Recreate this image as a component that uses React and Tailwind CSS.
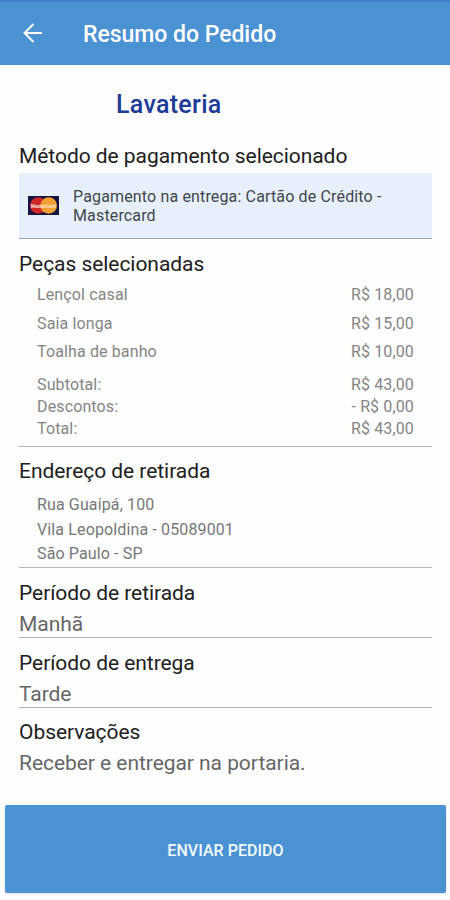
const items = [
  { name: "Lençol casal", price: "R$ 18,00" },
  { name: "Saia longa", price: "R$ 15,00" },
  { name: "Toalha de banho", price: "R$ 10,00" },
];

const totals = [
  { label: "Subtotal:", value: "R$ 43,00" },
  { label: "Descontos:", value: "- R$ 0,00" },
  { label: "Total:", value: "R$ 43,00" },
];

const address = ["Rua Guaipá, 100", "Vila Leopoldina - 05089001", "São Paulo - SP"];

const SectionTitle = ({ children }) => (
  <h2 className="h-7 text-[21px] leading-7 tracking-[-0.05px] text-[#202020]">{children}</h2>
);

const MastercardLogo = () => (
  <svg viewBox="0 0 31 19" className="h-[19px] w-[31px] shrink-0">
    <rect width="31" height="19" fill="#171342" />
    <circle cx="10.3" cy="9.5" r="8.3" fill="#cf2629" />
    <circle cx="20.7" cy="9.5" r="8.3" fill="#f3a032" />
    <text
      x="15.5"
      y="11.5"
      textAnchor="middle"
      textLength="25"
      lengthAdjust="spacingAndGlyphs"
      fontSize="5.5"
      fontWeight="700"
      letterSpacing="0"
      fill="#fbe3d6"
    >
      MasterCard
    </text>
  </svg>
);

const App = () => {
  return (
    <div className="flex h-[900px] w-[450px] flex-col bg-[#fefefe] font-['Roboto',sans-serif]">
      {/* Header */}
      <header className="flex h-[65px] items-center border-t-2 border-[#447fcb] bg-[#4b92d3] pt-1 text-white">
        <button className="mb-[5px] ml-[22px] w-[61px]" aria-label="Voltar">
          <svg
            viewBox="0 0 22 20"
            className="h-5 w-[22px]"
            fill="none"
            stroke="currentColor"
            strokeWidth="1.9"
          >
            <path d="M20 10H2.5M11.5 1L2.5 10L11.5 19" />
          </svg>
        </button>
        <h1 className="text-[23px] font-medium tracking-[-0.03px]">Resumo do Pedido</h1>
      </header>

      <main className="flex flex-col pr-[18px] pl-[19px]">
        <p className="mt-[25px] ml-[97px] h-[30px] text-[25px] leading-[30px] font-medium tracking-[0.3px] text-[#1c3c98]">
          Lavateria
        </p>

        {/* Payment method */}
        <section className="mt-[22px] border-b border-[#a3a7ac]">
          <SectionTitle>Método de pagamento selecionado</SectionTitle>
          <div className="mt-[3px] flex h-[65px] items-center bg-[#e7f0fa] pl-[9px]">
            <MastercardLogo />
            <p className="ml-[14px] text-[16px] leading-[19px] tracking-[0.15px] text-[#41464d]">
              Pagamento na entrega: Cartão de Crédito -<br />
              Mastercard
            </p>
          </div>
        </section>

        {/* Selected pieces */}
        <section className="mt-[11px] h-[197px] border-b border-[#b5b5b5] text-[16px] tracking-[0.13px] text-[#858585]">
          <SectionTitle>Peças selecionadas</SectionTitle>
          <div className="mt-[3px] pr-[18px] pl-[18px]">
            {items.map((item) => (
              <div key={item.name} className="flex h-[28.5px] items-center justify-between">
                <span>{item.name}</span>
                <span>{item.price}</span>
              </div>
            ))}
          </div>
          <div className="mt-[7px] pr-[18px] pl-[18px]">
            {totals.map((row) => (
              <div key={row.label} className="flex h-[22px] items-center justify-between">
                <span>{row.label}</span>
                <span>{row.value}</span>
              </div>
            ))}
          </div>
        </section>

        {/* Pickup address */}
        <section className="mt-[10px] h-[111px] border-b border-[#b5b5b5]">
          <SectionTitle>Endereço de retirada</SectionTitle>
          <div className="mt-2 pl-[18px] text-[16px] leading-[24.5px] tracking-[0.13px] text-[#777777]">
            {address.map((line) => (
              <p key={line}>{line}</p>
            ))}
          </div>
        </section>

        {/* Pickup and delivery periods */}
        <section className="mt-[11px] h-[59px] border-b border-[#b5b5b5]">
          <SectionTitle>Período de retirada</SectionTitle>
          <p className="mt-[3px] text-[21px] leading-7 tracking-[-0.05px] text-[#666666]">Manhã</p>
        </section>
        <section className="mt-[11px] h-[59px] border-b border-[#b5b5b5]">
          <SectionTitle>Período de entrega</SectionTitle>
          <p className="mt-[3px] text-[21px] leading-7 tracking-[-0.05px] text-[#666666]">Tarde</p>
        </section>

        {/* Notes */}
        <section className="mt-[10px] h-[60px]">
          <SectionTitle>Observações</SectionTitle>
          <p className="mt-[3px] text-[21px] leading-7 tracking-[-0.05px] text-[#666666]">
            Receber e entregar na portaria.
          </p>
        </section>
      </main>

      <button className="mt-auto mr-1 mb-[7px] ml-[5px] h-[88px] rounded-xs bg-[#4b92d3] pt-[3px] text-[16px] font-medium tracking-[0.05px] text-[#f2faff] shadow">
        ENVIAR PEDIDO
      </button>
    </div>
  );
};

export default App;
